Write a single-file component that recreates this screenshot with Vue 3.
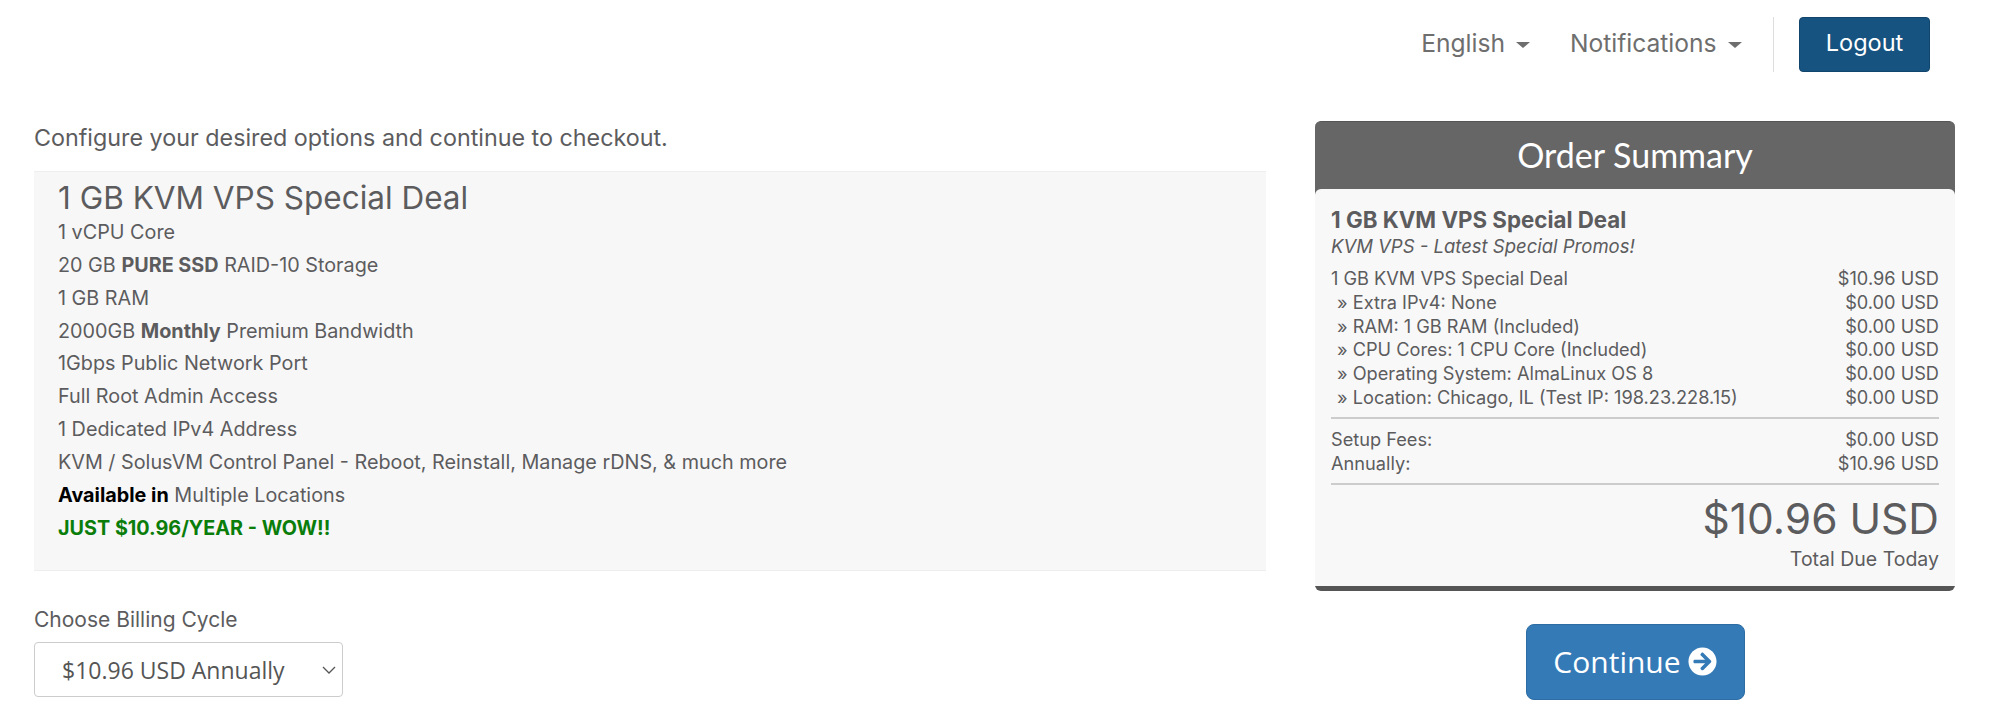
<script setup>
const items = [
  { label: '1 GB KVM VPS Special Deal', price: '$10.96 USD' },
  { label: '» Extra IPv4: None', price: '$0.00 USD', sub: true },
  { label: '» RAM: 1 GB RAM (Included)', price: '$0.00 USD', sub: true },
  { label: '» CPU Cores: 1 CPU Core (Included)', price: '$0.00 USD', sub: true },
  { label: '» Operating System: AlmaLinux OS 8', price: '$0.00 USD', sub: true },
  { label: '» Location: Chicago, IL (Test IP: 198.23.228.15)', price: '$0.00 USD', sub: true },
]
const fees = [
  { label: 'Setup Fees:', price: '$0.00 USD' },
  { label: 'Annually:', price: '$10.96 USD' },
]
</script>

<template>
  <div class="page">
    <header class="topbar">
      <a class="navlink">English <span class="caret"></span></a>
      <a class="navlink">Notifications <span class="caret"></span></a>
      <span class="divider"></span>
      <button class="logout">Logout</button>
    </header>

    <main class="main">
      <section class="left">
        <p class="intro">Configure your desired options and continue to checkout.</p>
        <div class="product">
          <h3>1 GB KVM VPS Special Deal</h3>
          <div class="line">1 vCPU Core</div>
          <div class="line">20 GB <b>PURE SSD</b> RAID-10 Storage</div>
          <div class="line">1 GB RAM</div>
          <div class="line">2000GB <b>Monthly</b> Premium Bandwidth</div>
          <div class="line">1Gbps Public Network Port</div>
          <div class="line">Full Root Admin Access</div>
          <div class="line">1 Dedicated IPv4 Address</div>
          <div class="line">KVM / SolusVM Control Panel - Reboot, Reinstall, Manage rDNS, &amp; much more</div>
          <div class="line"><b class="black">Available in</b> Multiple Locations</div>
          <div class="line"><b class="green">JUST $10.96/YEAR - WOW!!</b></div>
        </div>
        <label class="cycle-label">Choose Billing Cycle</label>
        <div class="cycle-wrap">
          <select class="cycle">
            <option>$10.96 USD Annually</option>
          </select>
          <svg class="chev" viewBox="0 0 14 8" width="14" height="8">
            <path d="M1 1l6 6 6-6" fill="none" stroke="#555" stroke-width="1.300"/>
          </svg>
        </div>
      </section>

      <aside class="right">
        <div class="summary">
          <h2>Order Summary</h2>
          <div class="body">
            <div class="name">1 GB KVM VPS Special Deal</div>
            <div class="group">KVM VPS - Latest Special Promos!</div>
            <div class="rows">
              <div v-for="r in items" :key="r.label" class="row" :class="{ sub: r.sub }">
                <span>{{ r.label }}</span><span>{{ r.price }}</span>
              </div>
            </div>
            <div class="rows fees">
              <div v-for="r in fees" :key="r.label" class="row">
                <span>{{ r.label }}</span><span>{{ r.price }}</span>
              </div>
            </div>
            <div class="total">
              <div class="amount">$10.96 USD</div>
              <div class="due">Total Due Today</div>
            </div>
          </div>
        </div>
        <button class="continue">
          Continue
          <svg class="arrow" viewBox="0 0 512 512" width="29" height="29">
            <path fill="#fff" d="M256 8c137 0 248 111 248 248S393 504 256 504 8 393 8 256 119 8 256 8zm-28.900 143.600l75.500 72.400H120c-13.300 0-24 10.700-24 24v16c0 13.300 10.700 24 24 24h182.600l-75.500 72.400c-9.700 9.300-9.900 24.800-.4 34.300l11 10.900c9.400 9.400 24.600 9.400 33.900 0L404.300 273c9.400-9.400 9.400-24.600 0-33.900L271.600 106.300c-9.400-9.400-24.600-9.400-33.900 0l-11 10.900c-9.500 9.600-9.300 25.100.4 34.400z"/>
          </svg>
        </button>
      </aside>
    </main>
  </div>
</template>

<style>
html, body { margin: 0; background: #fff; }
</style>

<style scoped>
.page {
  font-family: Inter, "Open Sans", sans-serif;
  color: #5c5c5e;
  height: 721px;
  overflow: hidden;
}
.topbar {
  display: flex;
  align-items: center;
  justify-content: flex-end;
  padding: 17px 70px 0 0;
  height: 55px;
}
.navlink {
  font-size: 24.600px;
  color: #6e6e6e;
  margin-right: 40px;
  white-space: nowrap;
  position: relative;
  top: -2px;
}
.navlink + .navlink { margin-right: 31.500px; }
.caret {
  display: inline-block;
  width: 0;
  height: 0;
  margin-left: 4px;
  vertical-align: middle;
  border-left: 7px solid transparent;
  border-right: 7px solid transparent;
  border-top: 6px solid #6e6e6e;
}
.divider {
  width: 1px;
  height: 55px;
  background: #ddd;
  margin-right: 25px;
}
.logout {
  width: 131px;
  height: 55px;
  padding: 0 0 4px;
  background: #175380;
  border: 1px solid #11456c;
  border-radius: 4px;
  color: #fff;
  font: 23.500px Inter, sans-serif;
}
.main {
  display: grid;
  grid-template-columns: 1232px 640px;
  column-gap: 49px;
  padding: 49px 0 0 34px;
}
.intro {
  margin: 0;
  font-size: 23.300px;
  line-height: 34px;
}
.product {
  margin-top: 16px;
  height: 400px;
  box-sizing: border-box;
  padding: 7px 24px 0;
  background: #f7f7f7;
  border-top: 1px solid #eee;
  border-bottom: 1px solid #eee;
}
.product h3 {
  margin: 0;
  font-size: 31.500px;
  font-weight: 400;
  line-height: 37px;
}
.line {
  font-size: 19.800px;
  line-height: 32.850px;
}
.line b { font-weight: 700; }
.black { color: #000; }
.green { color: #0a7d0a; }
.cycle-label {
  display: block;
  margin-top: 34px;
  font-size: 21px;
  line-height: 30px;
}
.cycle-wrap {
  position: relative;
  margin-top: 7px;
  width: 309px;
}
.cycle {
  display: block;
  appearance: none;
  width: 100%;
  height: 55px;
  padding: 0 27px;
  background: #fff;
  border: 1px solid #ccc;
  border-radius: 4px;
  font: 23px "Open Sans", sans-serif;
  color: #555;
}
.chev {
  position: absolute;
  right: 7px;
  top: 24px;
  pointer-events: none;
}
.right { display: flex; flex-direction: column; align-items: center; }
.summary {
  width: 640px;
  box-sizing: border-box;
  background: #666;
  border-radius: 6px;
  border-top: 1px solid #555;
  border-bottom: 5px solid #555;
}
.summary h2 {
  margin: 0;
  height: 67px;
  line-height: 65px;
  text-align: center;
  color: #fff;
  font-family: Lato, sans-serif;
  font-size: 34px;
  font-weight: 400;
}
.body {
  background: #f8f8f8;
  border-radius: 6px 6px 0 0;
  padding: 17px 16px 8px;
  height: 397px;
  box-sizing: border-box;
}
.name { font-size: 22.300px; font-weight: 700; line-height: 28px; }
.group { font-size: 18.500px; font-style: italic; line-height: 24px; }
.rows {
  margin-top: 9px;
  padding-bottom: 7px;
  border-bottom: 2px solid #ccc;
}
.fees { margin-top: 9px; padding-bottom: 8px; }
.row {
  display: flex;
  justify-content: space-between;
  font-size: 18.200px;
  line-height: 23.800px;
}
.sub { padding-left: 6px; }
.total { text-align: right; margin-top: 7px; }
.amount { font-size: 42.500px; line-height: 54px; }
.due { font-size: 19.500px; line-height: 26px; }
.continue {
  margin-top: 33px;
  width: 219px;
  height: 76px;
  padding-bottom: 2px;
  display: flex;
  align-items: center;
  justify-content: center;
  gap: 7px;
  background: #337ab7;
  border: 1px solid #2e6da4;
  border-radius: 8px;
  color: #fff;
  font: 30px "Open Sans", sans-serif;
}
.arrow { display: block; }
</style>
